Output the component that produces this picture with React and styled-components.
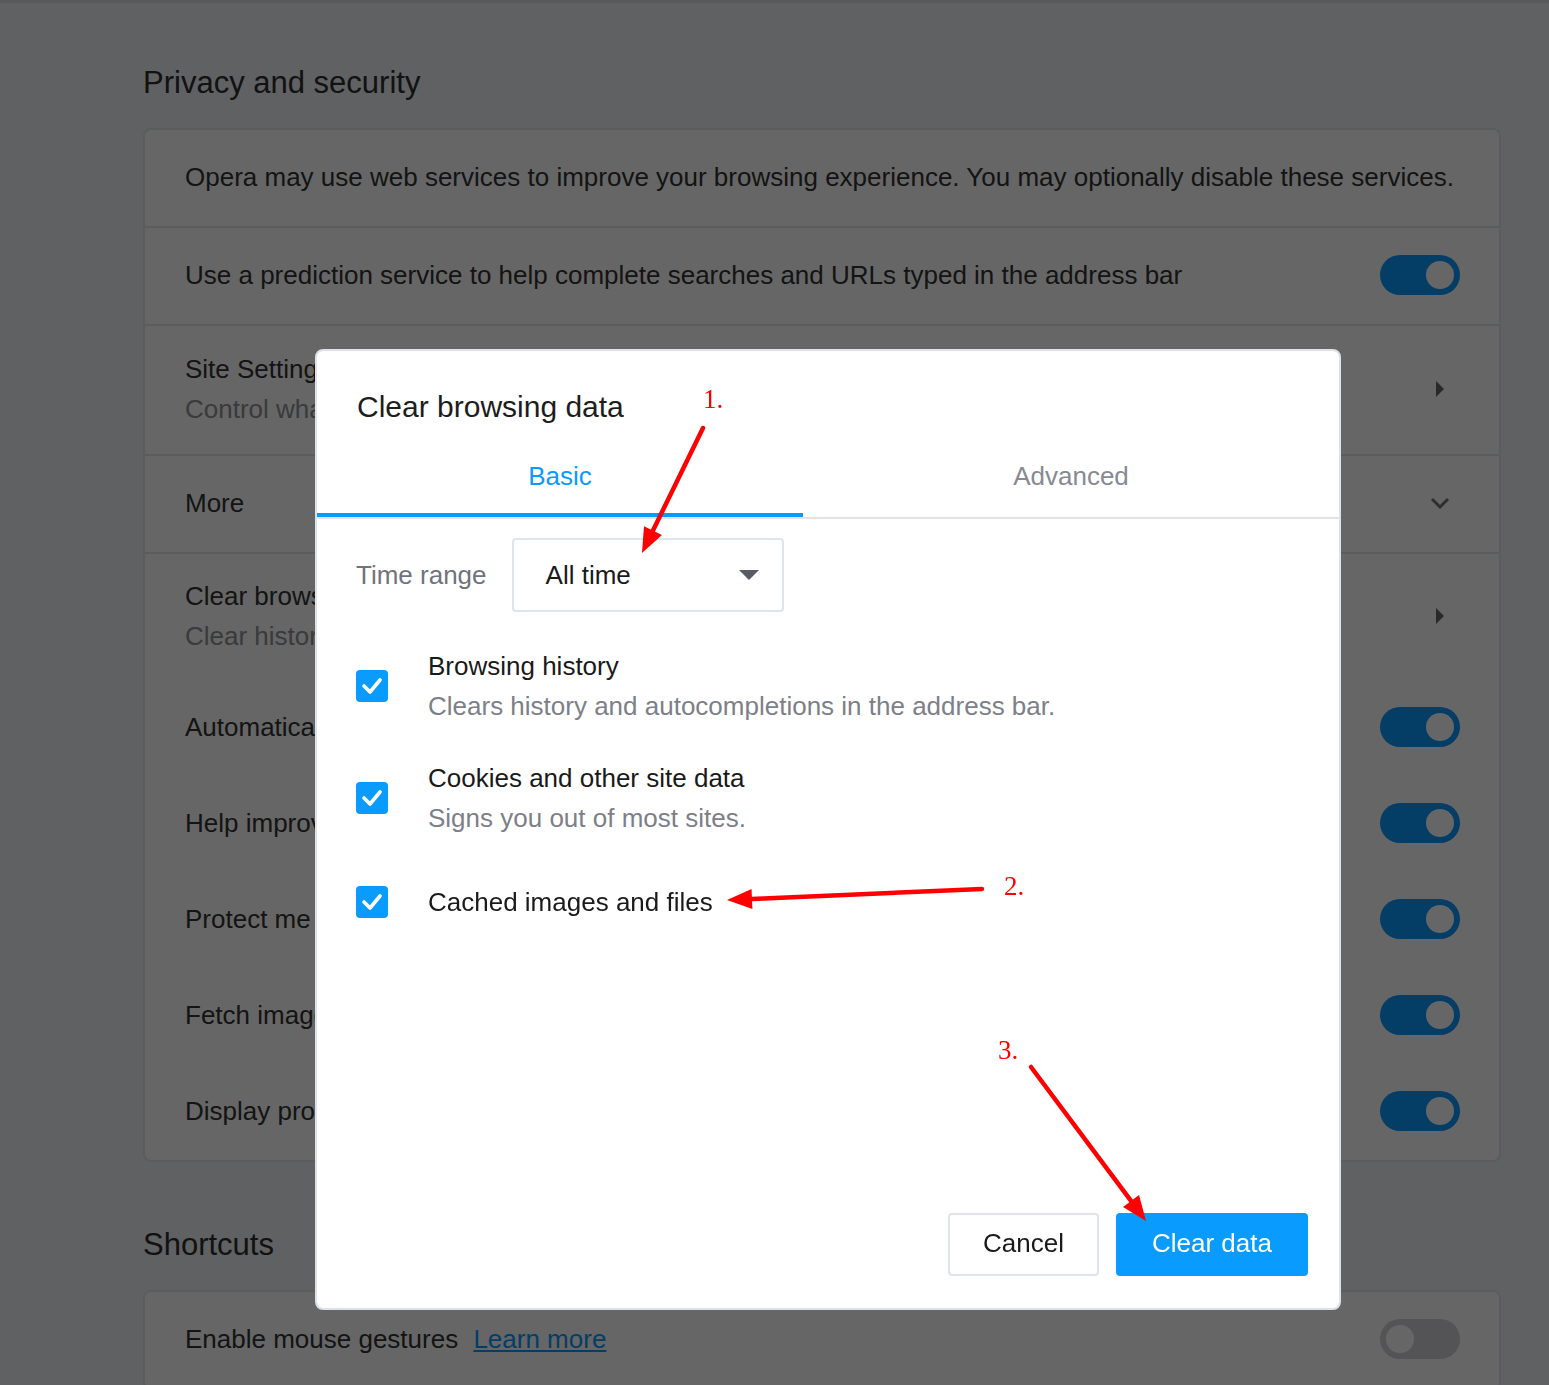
import React from "react";
import styled, { createGlobalStyle } from "styled-components";

const GlobalStyle = createGlobalStyle`
  html, body {
    margin: 0;
    padding: 0;
  }
  body {
    background: #f0f2f6;
    font-family: "Liberation Sans", Arial, Helvetica, sans-serif;
    color: #333;
  }
`;

const settingsRows = [
  { title: "Opera may use web services to improve your browsing experience. You may optionally disable these services.", h: 96 },
  { title: "Use a prediction service to help complete searches and URLs typed in the address bar", h: 96, toggle: true, divider: true },
  { title: "Site Settings", sub: "Control what information websites can use and what content they can show you", h: 128, icon: "caret", divider: true },
  { title: "More", h: 96, icon: "chevron", divider: true },
  { title: "Clear browsing data", sub: "Clear history, cookies, cache, and more", h: 126, icon: "caret", divider: true },
  { title: "Automatically send crash reports to Opera", h: 96, toggle: true },
  { title: "Help improve Opera by sending feature usage information", h: 96, toggle: true },
  { title: "Protect me from malicious sites", h: 96, toggle: true },
  { title: "Fetch images for suggested sources in News, based on history", h: 96, toggle: true },
  { title: "Display promotional notifications", h: 96, toggle: true },
];

const options = [
  { title: "Browsing history", sub: "Clears history and autocompletions in the address bar." },
  { title: "Cookies and other site data", sub: "Signs you out of most sites." },
  { title: "Cached images and files", extra: true },
];

// red annotation arrows drawn on top of the screenshot
const arrows = [
  { from: [703, 428], to: [642, 553], label: "1.", lx: 703, ly: 408 },
  { from: [982, 889], to: [727, 900], label: "2.", lx: 1004, ly: 895 },
  { from: [1031, 1067], to: [1146, 1221], label: "3.", lx: 998, ly: 1059 },
];

function arrowHead(from, to, len = 25, half = 10) {
  const dx = to[0] - from[0];
  const dy = to[1] - from[1];
  const d = Math.hypot(dx, dy);
  const ux = dx / d;
  const uy = dy / d;
  const bx = to[0] - ux * len;
  const by = to[1] - uy * len;
  const pts = [
    [to[0], to[1]],
    [bx - uy * half, by + ux * half],
    [bx + uy * half, by - ux * half],
  ];
  return { base: [bx, by], points: pts.map((p) => p.join(",")).join(" ") };
}

export default function App() {
  return (
    <>
      <GlobalStyle />
      <Page>
        <SectionTitle>Privacy and security</SectionTitle>
        <Card>
          {settingsRows.map((row) => (
            <Row key={row.title} $h={row.h} $divider={row.divider}>
              <div>
                <RowTitle>{row.title}</RowTitle>
                {row.sub && <RowSub>{row.sub}</RowSub>}
              </div>
              {row.toggle && <Toggle $on />}
              {row.icon === "caret" && (
                <IconBox>
                  <svg width="10" height="18" viewBox="0 0 10 18">
                    <path d="M1 1 L9 9 L1 17 Z" fill="#666" />
                  </svg>
                </IconBox>
              )}
              {row.icon === "chevron" && (
                <IconBox>
                  <svg width="20" height="12" viewBox="0 0 20 12">
                    <path d="M2 2 L10 10 L18 2" fill="none" stroke="#777" strokeWidth="3" />
                  </svg>
                </IconBox>
              )}
            </Row>
          ))}
        </Card>

        <SectionTitle $top={66}>Shortcuts</SectionTitle>
        <Card>
          <Row $h={96}>
            <RowTitle>
              Enable mouse gestures <Link>Learn more</Link>
            </RowTitle>
            <Toggle />
          </Row>
        </Card>
      </Page>

      <Backdrop />

      <Dialog>
        <DialogTitle>Clear browsing data</DialogTitle>
        <Tabs>
          <Tab $active>Basic</Tab>
          <Tab>Advanced</Tab>
        </Tabs>
        <DialogBody>
          <TimeRow>
            <FieldLabel>Time range</FieldLabel>
            <Select>
              <span>All time</span>
              <svg width="20" height="10" viewBox="0 0 20 10">
                <path d="M0 0 H20 L10 10 Z" fill="#575b63" />
              </svg>
            </Select>
          </TimeRow>
          <OptionList>
            {options.map((opt) => (
              <Option key={opt.title} $extra={opt.extra}>
                <Check>
                  <svg width="22" height="18" viewBox="0 0 22 18">
                    <path d="M3 9 L9 15 L19 3" fill="none" stroke="#fff" strokeWidth="3.6" strokeLinecap="round" strokeLinejoin="round" />
                  </svg>
                </Check>
                <div>
                  <OptionTitle>{opt.title}</OptionTitle>
                  {opt.sub && <OptionSub>{opt.sub}</OptionSub>}
                </div>
              </Option>
            ))}
          </OptionList>
        </DialogBody>
        <Footer>
          <Button>Cancel</Button>
          <Button $primary>Clear data</Button>
        </Footer>
      </Dialog>

      <Annotations width="1549" height="1385" viewBox="0 0 1549 1385">
        {arrows.map((a) => {
          const head = arrowHead(a.from, a.to);
          return (
            <g key={a.label}>
              <line
                x1={a.from[0]}
                y1={a.from[1]}
                x2={head.base[0]}
                y2={head.base[1]}
                stroke="#ff0000"
                strokeWidth="4.5"
                strokeLinecap="round"
              />
              <polygon points={head.points} fill="#ff0000" />
              <AnnotationText x={a.lx} y={a.ly}>
                {a.label}
              </AnnotationText>
            </g>
          );
        })}
      </Annotations>
    </>
  );
}

const Page = styled.div`
  border-top: 3px solid #dcdfe4;
  padding: 63px 48px 0 143px;
  min-height: 1385px;
  box-sizing: border-box;
`;

const SectionTitle = styled.h2`
  margin: ${(p) => p.$top || 0}px 0 28px;
  font-size: 31px;
  line-height: 34px;
  font-weight: 400;
  color: #2e2e2e;
`;

const Card = styled.div`
  background: #fff;
  border: 2px solid #e4e6ea;
  border-radius: 8px;
  overflow: hidden;
`;

const Row = styled.div`
  display: flex;
  align-items: center;
  justify-content: space-between;
  box-sizing: border-box;
  min-height: ${(p) => p.$h + (p.$divider ? 2 : 0)}px;
  padding: 0 39px 2px 40px;
  border-top: ${(p) => (p.$divider ? "2px solid #e4e6ea" : "none")};
`;

const RowTitle = styled.div`
  font-size: 26px;
  line-height: 40px;
  color: #333;
  white-space: nowrap;
`;

const RowSub = styled.div`
  font-size: 26px;
  line-height: 40px;
  color: #909297;
  white-space: nowrap;
`;

const Link = styled.a`
  margin-left: 8px;
  color: #0a9bff;
  text-decoration: underline;
`;

const IconBox = styled.div`
  display: flex;
  align-items: center;
  justify-content: center;
  width: 40px;
  height: 40px;
`;

const Toggle = styled.div`
  position: relative;
  flex: none;
  width: 80px;
  height: 40px;
  border-radius: 20px;
  background: ${(p) => (p.$on ? "#0a9bff" : "#d2d3d7")};

  &::after {
    content: "";
    position: absolute;
    top: 6px;
    ${(p) => (p.$on ? "right: 6px;" : "left: 6px;")}
    width: 28px;
    height: 28px;
    border-radius: 50%;
    background: #fff;
  }
`;

const Backdrop = styled.div`
  position: fixed;
  inset: 0;
  background: rgba(0, 0, 0, 0.6);
  z-index: 10;
`;

const Dialog = styled.div`
  position: fixed;
  left: 315px;
  top: 349px;
  width: 1026px;
  height: 961px;
  box-sizing: border-box;
  display: flex;
  flex-direction: column;
  background: #fff;
  border: 2px solid #dbe2ea;
  border-radius: 8px;
  z-index: 20;
`;

const DialogTitle = styled.h1`
  margin: 0;
  padding: 39px 40px 0;
  font-size: 30px;
  line-height: 34px;
  font-weight: 400;
  color: #1d1d1d;
`;

const Tabs = styled.div`
  display: grid;
  grid-template-columns: 486px 1fr;
  margin-top: 11px;
  border-bottom: 2px solid #e3e3e3;
`;

const Tab = styled.div`
  display: flex;
  align-items: center;
  justify-content: center;
  height: 82px;
  box-sizing: border-box;
  padding-top: 4px;
  font-size: 26px;
  color: ${(p) => (p.$active ? "#0a9bff" : "#878a93")};
  border-bottom: 4px solid ${(p) => (p.$active ? "#0a9bff" : "transparent")};
`;

const DialogBody = styled.div`
  padding: 19px 40px 0 39px;
`;

const TimeRow = styled.div`
  display: flex;
  align-items: center;
  gap: 25px;
`;

const FieldLabel = styled.div`
  font-size: 26px;
  color: #70737c;
`;

const Select = styled.div`
  display: flex;
  align-items: center;
  justify-content: space-between;
  width: 272px;
  height: 74px;
  box-sizing: border-box;
  padding: 0 23px 0 32px;
  border: 2px solid #dde4ec;
  border-radius: 4px;
  font-size: 26px;
  color: #1a1a1a;
`;

const OptionList = styled.div`
  display: flex;
  flex-direction: column;
  gap: 32px;
  margin-top: 34px;
`;

const Option = styled.div`
  display: grid;
  grid-template-columns: 32px 1fr;
  column-gap: 40px;
  align-items: center;
  margin-top: ${(p) => (p.$extra ? 12 : 0)}px;
`;

const Check = styled.div`
  display: flex;
  align-items: center;
  justify-content: center;
  width: 32px;
  height: 32px;
  border-radius: 4px;
  background: #0a9bff;
`;

const OptionTitle = styled.div`
  font-size: 26px;
  line-height: 40px;
  color: #1a1a1a;
`;

const OptionSub = styled.div`
  font-size: 26px;
  line-height: 40px;
  color: #7d8089;
`;

const Footer = styled.div`
  margin-top: auto;
  display: flex;
  justify-content: flex-end;
  gap: 17px;
  padding: 0 31px 32px 0;
`;

const Button = styled.button`
  height: 63px;
  width: ${(p) => (p.$primary ? 192 : 151)}px;
  box-sizing: border-box;
  border: ${(p) => (p.$primary ? "none" : "2px solid #dde4ec")};
  border-radius: 4px;
  background: ${(p) => (p.$primary ? "#0a9bff" : "#fff")};
  color: ${(p) => (p.$primary ? "#fff" : "#1a1a1a")};
  font-family: "Liberation Sans", Arial, sans-serif;
  font-size: 26px;
  padding: 0 0 2px;
  cursor: pointer;
`;

const Annotations = styled.svg`
  position: fixed;
  left: 0;
  top: 0;
  z-index: 30;
  pointer-events: none;
`;

const AnnotationText = styled.text`
  font-family: "Liberation Serif", "Times New Roman", serif;
  font-size: 27px;
  fill: #ff0000;
`;
